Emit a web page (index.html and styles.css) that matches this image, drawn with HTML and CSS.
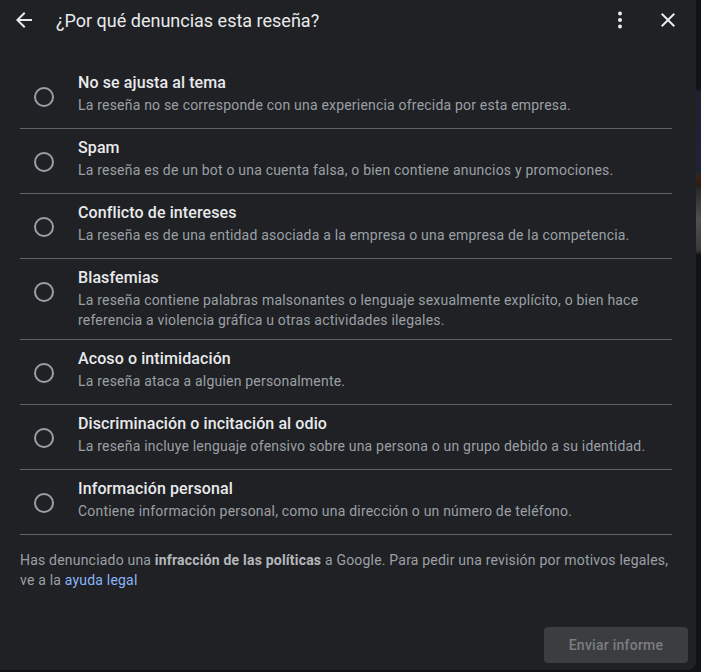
FILE: index.html
```html
<!DOCTYPE html>
<html lang="es">
<head>
  <meta charset="UTF-8" />
  <meta name="viewport" content="width=device-width, initial-scale=1" />
  <title>Denunciar reseña</title>
  <link rel="stylesheet" href="styles.css">
</head>
<body>

  <div class="dialog">
    <header class="dialog-head">
      <button class="icon-btn back" aria-label="Atrás">
        <svg viewBox="0 0 24 24" width="24" height="24"><path d="M20 11H7.83l5.59-5.59L12 4l-8 8 8 8 1.41-1.41L7.83 13H20v-2z"/></svg>
      </button>
      <h1>¿Por qué denuncias esta reseña?</h1>
      <button class="icon-btn" aria-label="Más opciones">
        <svg viewBox="0 0 24 24" width="24" height="24"><circle cx="12" cy="5.5" r="2"/><circle cx="12" cy="12" r="2"/><circle cx="12" cy="18.5" r="2"/></svg>
      </button>
      <button class="icon-btn close" aria-label="Cerrar">
        <svg viewBox="0 0 24 24" width="24" height="24"><path d="M19 6.41L17.59 5 12 10.59 6.41 5 5 6.41 10.59 12 5 17.59 6.41 19 12 13.41 17.59 19 19 17.59 13.41 12z"/></svg>
      </button>
    </header>

    <ul class="reasons">
      <li>
        <span class="radio"></span>
        <div class="reason-text">
          <h2>No se ajusta al tema</h2>
          <p>La reseña no se corresponde con una experiencia ofrecida por esta empresa.</p>
        </div>
      </li>
      <li>
        <span class="radio"></span>
        <div class="reason-text">
          <h2>Spam</h2>
          <p>La reseña es de un bot o una cuenta falsa, o bien contiene anuncios y promociones.</p>
        </div>
      </li>
      <li>
        <span class="radio"></span>
        <div class="reason-text">
          <h2>Conflicto de intereses</h2>
          <p>La reseña es de una entidad asociada a la empresa o una empresa de la competencia.</p>
        </div>
      </li>
      <li>
        <span class="radio"></span>
        <div class="reason-text">
          <h2>Blasfemias</h2>
          <p>La reseña contiene palabras malsonantes o lenguaje sexualmente explícito, o bien hace referencia a violencia gráfica u otras actividades ilegales.</p>
        </div>
      </li>
      <li>
        <span class="radio"></span>
        <div class="reason-text">
          <h2>Acoso o intimidación</h2>
          <p>La reseña ataca a alguien personalmente.</p>
        </div>
      </li>
      <li>
        <span class="radio"></span>
        <div class="reason-text">
          <h2>Discriminación o incitación al odio</h2>
          <p>La reseña incluye lenguaje ofensivo sobre una persona o un grupo debido a su identidad.</p>
        </div>
      </li>
      <li>
        <span class="radio"></span>
        <div class="reason-text">
          <h2>Información personal</h2>
          <p>Contiene información personal, como una dirección o un número de teléfono.</p>
        </div>
      </li>
    </ul>

    <p class="note">Has denunciado una <b>infracción de las políticas</b> a Google. Para pedir una revisión por motivos legales, ve a la <a href="#">ayuda legal</a></p>

    <div class="actions">
      <button class="submit" disabled>Enviar informe</button>
    </div>
  </div>

  <aside class="backdrop"></aside>

</body>
</html>
```

FILE: styles.css
```css
body {
  margin: 0;
  font-family: Roboto, "Liberation Sans", Arial, sans-serif;
  background: #111213;
  color: #e8eaed;
  display: flex;
  height: 672px;
  overflow: hidden;
}

.dialog {
  width: 696px;
  height: 670px;
  flex-shrink: 0;
  background: #202124;
  border-bottom-right-radius: 8px;
  display: flex;
  flex-direction: column;
  box-sizing: border-box;
}

.backdrop {
  flex: 1;
  background: linear-gradient(180deg,
    #111213 0, #111213 88px,
    #1b2230 92px, #1d2535 172px,
    #3a2416 176px, #2a1c14 186px,
    #2b2b2b 190px, #505050 220px, #3a3a3a 250px,
    #111213 255px);
}

.dialog-head {
  height: 40px;
  display: flex;
  align-items: center;
  padding: 0 16px 0 12px;
}

.dialog-head h1 {
  flex: 1;
  margin: 0 0 0 20px;
  font-size: 18px;
  font-weight: 400;
  color: #e8eaed;
}

.icon-btn {
  width: 24px;
  height: 24px;
  padding: 0;
  border: none;
  background: none;
  color: #e8eaed;
  display: flex;
}

.icon-btn svg {
  fill: currentColor;
}

.icon-btn.close {
  margin-left: 24px;
}

.reasons {
  list-style: none;
  margin: 24px 0 0;
  padding: 0 24px 0 20px;
}

.reasons li {
  display: flex;
  align-items: flex-start;
  min-height: 65px;
  padding: 7px 0 9px;
  box-sizing: border-box;
  border-bottom: 1px solid #5f6368;
}

.radio {
  width: 16px;
  height: 16px;
  border: 2px solid #9aa0a6;
  border-radius: 50%;
  margin: 16px 24px 0 14px;
  flex-shrink: 0;
}

.reason-text h2 {
  margin: 0;
  font-size: 16px;
  line-height: 24px;
  font-weight: 500;
  letter-spacing: 0.1px;
  color: #e8eaed;
}

.reason-text p {
  margin: 0;
  font-size: 14px;
  line-height: 20px;
  letter-spacing: 0.2px;
  color: #9aa0a6;
}

.note {
  margin: 15px 24px 0 20px;
  font-size: 14px;
  line-height: 20px;
  letter-spacing: 0.2px;
  color: #9aa0a6;
}

.note b {
  color: #b4b8bc;
}

.note a {
  color: #8ab4f8;
  text-decoration: none;
}

.actions {
  display: flex;
  justify-content: flex-end;
  margin-top: 37px;
  padding-right: 8px;
}

.submit {
  width: 144px;
  height: 36px;
  border: none;
  border-radius: 4px;
  background: #3c3d40;
  color: #7b7e82;
  font-family: Roboto, "Liberation Sans", Arial, sans-serif;
  font-size: 14px;
  font-weight: 500;
  letter-spacing: 0.25px;
}
```
